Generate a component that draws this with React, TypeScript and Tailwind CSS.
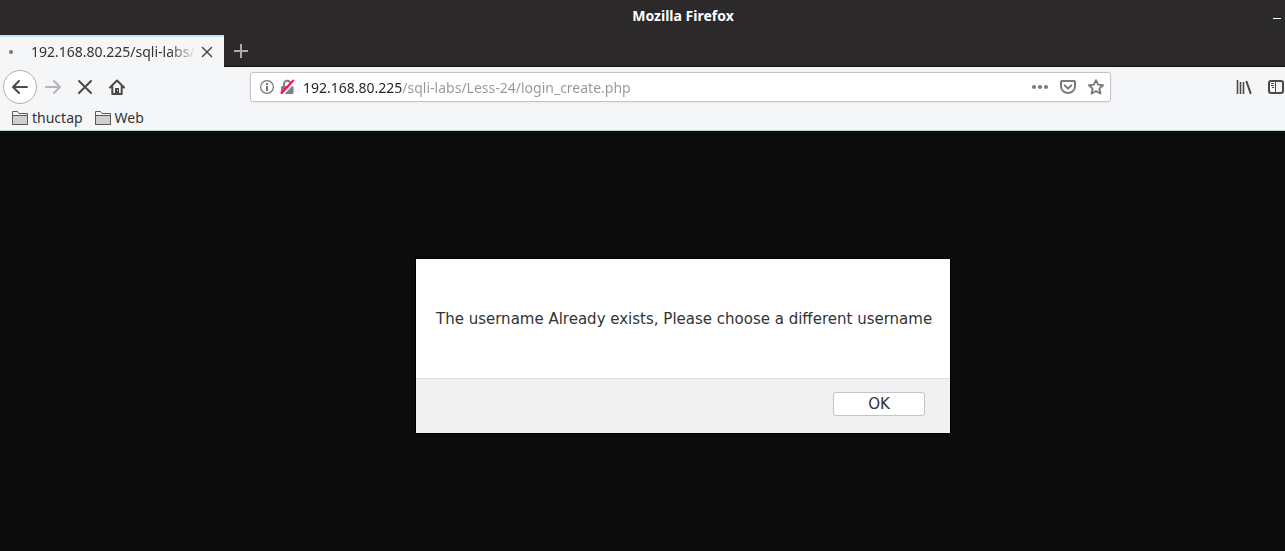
import React from "react";

function IconButton({ label, children, className = "" }: { label: string; children: React.ReactNode; className?: string }) {
  return (
    <button type="button" aria-label={label} className={`flex h-8 w-8 shrink-0 items-center justify-center ${className}`}>
      {children}
    </button>
  );
}

function CloseGlyph({ className }: { className: string }) {
  return (
    <svg viewBox="0 0 16 16" className={className} fill="none" stroke="currentColor" strokeWidth="2" strokeLinecap="round">
      <path d="M2 2l12 12M14 2L2 14" />
    </svg>
  );
}

function ArrowGlyph({ className }: { className: string }) {
  return (
    <svg viewBox="0 0 16 16" className={className} fill="none" stroke="currentColor" strokeWidth="2" strokeLinecap="round" strokeLinejoin="round">
      <path d="M15 8H1.5M7 2L1 8l6 6" />
    </svg>
  );
}

function Folder({ name }: { name: string }) {
  return (
    <a href="#" className="flex items-center gap-1">
      <svg viewBox="0 0 16 16" className="h-4 w-4 shrink-0">
        <path d="M.5 14.500v-13h5l1.500 2h8.500v11z" fill="#f5f6f8" stroke="#5a5a5a" strokeLinejoin="round" />
        <path d="M.5 5.500h15v9H.5z" fill="#cfcfcf" stroke="#5a5a5a" strokeLinejoin="round" />
      </svg>
      <span>{name}</span>
    </a>
  );
}

function TitleBar() {
  return (
    <header className="relative flex h-[35px] items-center justify-center bg-[#2c292a] pb-1">
      <h1 className="text-sm font-bold text-white">Mozilla Firefox</h1>
      <button type="button" aria-label="Minimize" className="absolute right-[81px] top-2 flex h-5 w-4 items-center justify-center">
        <span className="h-px w-2 bg-white" />
      </button>
    </header>
  );
}

function TabStrip() {
  return (
    <div className="flex h-8 bg-[#2c292a]">
      <div className="flex w-56 items-center border-t-2 border-[#bfe4fb] bg-[#f5f6f8] pr-[7px]">
        <span className="ml-[9px] h-1 w-1 shrink-0 rounded-full bg-[#777]" />
        <span className="ml-[18px] grow whitespace-nowrap text-sm text-[#333] [mask-image:linear-gradient(to_right,black_138px,transparent)]">
          192.168.80.225/sqli-labs/
        </span>
        <button type="button" aria-label="Close tab" className="flex h-5 w-5 shrink-0 items-center justify-center">
          <CloseGlyph className="h-3 w-3 text-[#4a4a4a]" />
        </button>
      </div>
      <div className="flex grow items-center border-b border-[#150f12] pl-px">
        <IconButton label="New tab">
          <svg viewBox="0 0 14 14" className="h-[14px] w-[14px]" stroke="#aaa8a9" strokeWidth="2">
            <path d="M7 0v14M0 7h14" />
          </svg>
        </IconButton>
      </div>
    </div>
  );
}

function AddressBar() {
  return (
    <div className="flex h-[30px] min-w-0 grow items-center rounded-[3px] border border-[#c0c3cb] bg-white pl-[9px] shadow-[0_1px_3px_rgba(0,0,0,0.05)]">
      <button type="button" aria-label="Site information" className="shrink-0">
        <svg viewBox="0 0 14 14" className="h-[14px] w-[14px]">
          <circle cx="7" cy="7" r="6.400" fill="none" stroke="#757575" strokeWidth="1.200" />
          <path d="M6 3h2v2H6zM6 6h2v5H6z" fill="#757575" />
        </svg>
      </button>
      <button type="button" aria-label="Connection is not secure" className="ml-1.5 shrink-0">
        <svg viewBox="0 0 15 16" className="h-4 w-[15px]">
          <path d="M4 7.500V5a3.200 3.200 0 0 1 6.500 0v2.500" fill="none" stroke="#808080" strokeWidth="2" />
          <rect x="1" y="7" width="12.500" height="8" rx="1" fill="#808080" />
          <path d="M2.500 16L15 2.800" stroke="#fff" strokeWidth="1.800" />
          <path d="M.8 14.500L13.700 1" stroke="#ff0f4b" strokeWidth="1.900" />
        </svg>
      </button>
      <input
        type="text"
        aria-label="Address"
        defaultValue="192.168.80.225/sqli-labs/Less-24/login_create.php"
        className="ml-2 h-6 min-w-0 grow bg-[linear-gradient(to_right,#222_99px,#979797_99px)] bg-clip-text text-sm text-transparent caret-black outline-none"
      />
      <div className="flex items-center text-[#7a7a7a]">
        <button type="button" aria-label="Page actions" className="flex h-7 w-7 items-center justify-center">
          <svg viewBox="0 0 16 16" className="h-4 w-4" fill="currentColor">
            <circle cx="2" cy="8" r="2" />
            <circle cx="8" cy="8" r="2" />
            <circle cx="14" cy="8" r="2" />
          </svg>
        </button>
        <button type="button" aria-label="Save to Pocket" className="flex h-7 w-7 items-center justify-center">
          <svg viewBox="0 0 16 16" className="h-4 w-4" fill="none" stroke="currentColor" strokeWidth="2" strokeLinecap="round" strokeLinejoin="round">
            <path d="M2 2h12a1 1 0 0 1 1 1v4.500a7 6.500 0 0 1-14 0V3a1 1 0 0 1 1-1z" />
            <path d="M4.800 6.500L8 9.600l3.200-3.100" />
          </svg>
        </button>
        <button type="button" aria-label="Bookmark this page" className="flex h-7 w-7 items-center justify-center">
          <svg viewBox="0 0 16 16" className="h-4 w-4" fill="none" stroke="currentColor" strokeWidth="1.900" strokeLinejoin="round">
            <path d="M8 1.200l2.100 4.400 4.900.6-3.600 3.400 1 4.900L8 12.200l-4.400 2.300 1-4.900L1 6.200l4.900-.6z" />
          </svg>
        </button>
      </div>
    </div>
  );
}

function NavBar() {
  return (
    <nav className="flex h-10 items-center text-[#4a4a4a]">
      <button type="button" aria-label="Back" className="ml-[3px] flex h-[34px] w-[34px] shrink-0 items-center justify-center rounded-full border border-[#b0b0b2] bg-white">
        <ArrowGlyph className="h-4 w-4" />
      </button>
      <IconButton label="Forward">
        <ArrowGlyph className="h-4 w-4 rotate-180 text-[#b5b6b8]" />
      </IconButton>
      <IconButton label="Stop">
        <CloseGlyph className="h-4 w-4" />
      </IconButton>
      <IconButton label="Home">
        <svg viewBox="0 0 16 16" className="h-4 w-4">
          <path d="M1 8.500l7-7 7 7M3.300 7.500V15h9.400V7.500" fill="none" stroke="currentColor" strokeWidth="2" strokeLinecap="round" strokeLinejoin="round" />
          <path d="M6 9h4v6H6z" fill="currentColor" />
          <path d="M8 11h1v1H8z" fill="#f5f6f8" />
        </svg>
      </IconButton>
      <div className="w-[117px] shrink-0" />
      <AddressBar />
      <div className="w-[117px] shrink-0" />
      <div className="flex w-[138px] shrink-0">
        <IconButton label="Library">
          <svg viewBox="0 0 16 16" className="h-4 w-4" stroke="currentColor" strokeWidth="1.600">
            <path d="M1.500 1v14M4.500 3v12M7.500 3v12" />
            <path d="M10.300 2l4.500 12.800" strokeWidth="2" />
          </svg>
        </IconButton>
        <IconButton label="Sidebars">
          <svg viewBox="0 0 16 16" className="h-4 w-4" fill="none" stroke="currentColor">
            <rect x="1" y="2" width="14" height="12" rx="2" strokeWidth="2" />
            <path d="M7.500 2v12" />
            <path d="M3 4.500h3M3 6.500h3M4 8.500h2" />
          </svg>
        </IconButton>
      </div>
    </nav>
  );
}

function AlertDialog() {
  return (
    <section
      role="alertdialog"
      aria-describedby="alert-message"
      className="w-[534px] max-w-full bg-white font-['DejaVu_Sans',sans-serif] text-[#333] shadow-[0_0_0_1px_#000]"
    >
      <p id="alert-message" className="flex h-[119px] items-center whitespace-nowrap pl-5 pt-0.5 text-[15px]">
        The username Already exists, Please choose a different username
      </p>
      <div className="flex h-[55px] items-center justify-end border-t border-[#dfdfdf] bg-[#f1f1f1] pb-1 pr-[25px]">
        <button type="button" className="flex h-6 w-[92px] items-center justify-center rounded-[3px] border border-[#c0c4cf] bg-white text-[15px]">
          OK
        </button>
      </div>
    </section>
  );
}

export default function App() {
  return (
    <div className="overflow-x-clip bg-[#0c0c0c] font-['Noto_Sans',sans-serif]">
      <div className="flex min-h-screen w-[calc(100%+81px)] flex-col">
        <TitleBar />
        <TabStrip />
        <div className="border-b border-[#c3d3d5] bg-[#f5f6f8]">
          <NavBar />
          <div className="flex h-[23px] items-center gap-3 pb-0.5 pl-3 text-sm text-[#333]">
            <Folder name="thuctap" />
            <Folder name="Web" />
          </div>
        </div>
        <main className="flex grow items-start justify-center pb-8 pt-32">
          <AlertDialog />
        </main>
      </div>
    </div>
  );
}
